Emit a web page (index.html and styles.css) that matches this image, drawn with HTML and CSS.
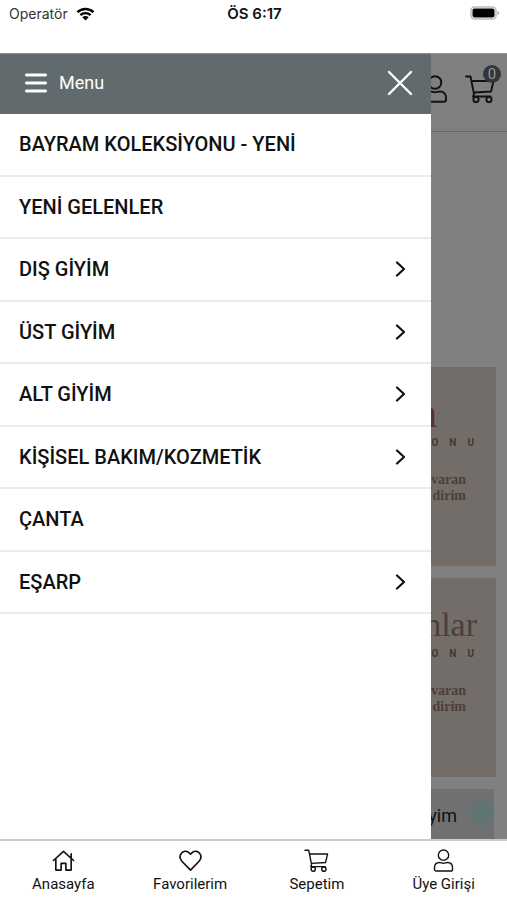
FILE: index.html
```html
<!DOCTYPE html>
<html lang="tr">
<head>
<meta charset="utf-8">
<meta name="viewport" content="width=device-width, initial-scale=1">
<title>Menu</title>
<link rel="stylesheet" href="styles.css">
</head>
<body>
<svg class="defs" aria-hidden="true">
  <symbol id="cart" viewBox="0 0 30 28">
    <path d="M1 1.500h4.500l3.500 17.500-1 2.500h17.500M6.500 6h22l-2.500 10.500-17 1"/>
    <circle cx="11" cy="24.500" r="2.600"/><circle cx="24" cy="24.500" r="2.600"/>
  </symbol>
  <symbol id="user" viewBox="0 0 24 28">
    <circle cx="12" cy="7.500" r="6.300"/>
    <path d="M7 16.500c2 0 3 .8 5 .8s3-.8 5-.8c4 0 6 3 6 6.500v1.500c0 1.500-1 2.300-2.300 2.300H3.300C2 26.800 1 26 1 24.500V23c0-3.500 2-6.500 6-6.500z"/>
  </symbol>
  <symbol id="chevron" viewBox="0 0 10 16"><path d="M1.500 1.500L8.500 8l-7 6.500"/></symbol>
</svg>

<header class="status">
  <span class="carrier">Operatör
    <svg class="wifi" viewBox="0 0 18 14" aria-hidden="true"><path d="M1 5.200a11.500 11.500 0 0 1 16 0M3.900 8.200a7.400 7.400 0 0 1 10.200 0"/><path class="dot" d="M9 13.500L5.800 10.300a4.600 4.600 0 0 1 6.400 0z"/></svg>
  </span>
  <span class="clock">ÖS 6:17</span>
  <svg class="battery" viewBox="0 0 30 14" aria-hidden="true"><rect class="shell" x="1" y="1" width="25" height="12" rx="3.500"/><rect x="2.500" y="2.500" width="22" height="9" rx="2"/><path class="tip" d="M27.500 5c2 .5 2 3.500 0 4z"/></svg>
</header>

<div class="stage">
  <main class="page">
    <div class="toolbar">
      <svg class="tool user" aria-hidden="true"><use href="#user"/></svg>
      <a class="basket" href="#sepet" aria-label="Sepet"><svg class="tool" aria-hidden="true"><use href="#cart"/></svg><span class="badge">0</span></a>
    </div>
    <div class="banners">
      <section class="banner">
        <h2 class="title red">n</h2>
        <p class="sub">ONU</p>
        <p class="copy">varan<br>dirim</p>
      </section>
      <section class="banner">
        <h2 class="title">nlar</h2>
        <p class="sub">ONU</p>
        <p class="copy">varan<br>dirim</p>
      </section>
      <section class="category"><span>yim</span><i class="bubble"></i></section>
    </div>
  </main>

  <aside class="drawer">
    <div class="drawer-head">
      <svg class="bars" viewBox="0 0 22 20" aria-hidden="true"><path d="M1.500 2h19M1.500 10h19M1.500 18h19"/></svg>
      <span>Menu</span>
      <button class="close" type="button" aria-label="Kapat"><svg viewBox="0 0 26 26" aria-hidden="true"><path d="M2 2l22 22M24 2L2 24"/></svg></button>
    </div>
    <nav class="menu">
      <a href="#bayram">BAYRAM KOLEKSİYONU - YENİ</a>
      <a href="#yeni">YENİ GELENLER</a>
      <a href="#dis">DIŞ GİYİM<svg class="chevron" aria-hidden="true"><use href="#chevron"/></svg></a>
      <a href="#ust">ÜST GİYİM<svg class="chevron" aria-hidden="true"><use href="#chevron"/></svg></a>
      <a href="#alt">ALT GİYİM<svg class="chevron" aria-hidden="true"><use href="#chevron"/></svg></a>
      <a href="#bakim">KİŞİSEL BAKIM/KOZMETİK<svg class="chevron" aria-hidden="true"><use href="#chevron"/></svg></a>
      <a href="#canta">ÇANTA</a>
      <a href="#esarp">EŞARP<svg class="chevron" aria-hidden="true"><use href="#chevron"/></svg></a>
    </nav>
  </aside>
</div>

<nav class="tabs">
  <a href="#anasayfa"><svg viewBox="0 0 24 24" aria-hidden="true"><path d="M1.500 12L12 2.500 22.500 12M4 10.500V22h5.500v-7h5v7H20V10.500M20 9V5"/></svg>Anasayfa</a>
  <a href="#favoriler"><svg viewBox="0 0 24 24" aria-hidden="true"><path d="M12 22L3 12.800C-2 7 4.500-.5 10 3.500l2 2 2-2c5.500-4 12 3.500 7 9.300z"/></svg>Favorilerim</a>
  <a href="#sepet"><svg aria-hidden="true"><use href="#cart"/></svg>Sepetim</a>
  <a href="#giris"><svg aria-hidden="true"><use href="#user"/></svg>Üye Girişi</a>
</nav>
</body>
</html>
```
FILE: styles.css
```css
* { box-sizing: border-box; }
body {
  margin: 0;
  min-height: 100vh;
  display: flex;
  flex-direction: column;
  background: #fff;
  color: #111;
  font-family: Roboto, "Liberation Sans", sans-serif;
}
a { color: inherit; text-decoration: none; }
h2, p { margin: 0; }
svg { fill: none; stroke: currentColor; stroke-linecap: round; stroke-linejoin: round; }
.defs { position: absolute; width: 0; height: 0; }

.status {
  display: grid;
  grid-template-columns: 1fr auto 1fr;
  align-items: start;
  height: 53px;
  padding: 5px 7px 0 9px;
  font: 14px/18px Inter, sans-serif;
}
.carrier { display: flex; align-items: center; gap: 8px; color: #333; }
.wifi { width: 19px; height: 14px; color: #000; stroke-width: 2.4; stroke-linecap: butt; }
.wifi .dot { fill: #000; stroke: none; }
.clock { font-size: 15px; font-weight: 600; }
.battery { width: 30px; height: 14px; margin-top: 1px; justify-self: end; fill: #000; stroke: none; }
.battery .shell { fill: #fff; stroke: #bbb; stroke-width: 1.500; }
.battery .tip { fill: #aaa; }

.stage { position: relative; flex: 1; display: flex; flex-direction: column; background: #808080; }
.page { flex: 1; display: flex; flex-direction: column; }
.toolbar {
  display: flex;
  justify-content: flex-end;
  align-items: center;
  gap: 18px;
  height: 79px;
  padding: 0 12px 8px 0;
  border-top: 1px solid #929696;
  border-bottom: 1px solid #666;
}
.tool { display: block; width: 30px; height: 28px; stroke-width: 1.900; }
.tool.user { width: 24px; }
.basket { position: relative; }
.badge {
  position: absolute;
  top: -10px;
  right: -6px;
  width: 18px;
  height: 18px;
  border-radius: 50%;
  background: #303738;
  color: #929696;
  font-size: 15px;
  line-height: 18px;
  text-align: center;
}
.banners { display: flex; flex-direction: column; flex: 1; gap: 12px; padding: 235px 11px 0; }
.banner { height: 199px; padding: 26px 19px; background: #726d69; text-align: right; }
.title { margin-bottom: 2px; font: 34px/42px "Liberation Serif", serif; color: #4e3d39; }
.title.red { padding-right: 40px; font-size: 40px; color: #5c3033; }
.sub { margin-right: -8px; font-size: 10px; font-weight: 700; line-height: 12px; letter-spacing: 11px; color: #3e3835; }
.copy { margin: 23px 11px 0 0; font: 700 14px/16px "Liberation Serif", serif; color: #4e3d39; }
.category {
  display: flex;
  align-items: center;
  justify-content: flex-end;
  gap: 13px;
  flex: 1;
  margin-right: 2px;
  padding-top: 4px;
  background: #6f7070;
  font-size: 18px;
  line-height: 24px;
}
.bubble { width: 24px; height: 24px; margin-bottom: 8px; border-radius: 50%; background: #607474; }

.drawer {
  position: absolute;
  inset: 0 15% 0 0;
  background: #fff;
}
.drawer-head {
  display: flex;
  align-items: center;
  gap: 12px;
  height: 61px;
  padding: 0 18px 3px 25px;
  background: #616b6d;
  border-top: 1px solid #879091;
  color: #fff;
  font-size: 18px;
}
.bars { width: 22px; height: 20px; stroke-width: 3; }
.close { margin-left: auto; padding: 0; border: 0; background: none; color: #fff; }
.close svg { display: block; width: 26px; height: 26px; stroke-width: 2.400; }
.menu { display: grid; grid-auto-rows: 1fr; height: 500px; }
.menu a {
  display: flex;
  align-items: center;
  justify-content: space-between;
  padding: 0 25px 0 19px;
  border-bottom: 2px solid #ececec;
  font-size: 20px;
  font-weight: 500;
}
.chevron { width: 11px; height: 16px; stroke-width: 2.200; }

.tabs {
  display: grid;
  grid-template-columns: repeat(4, 1fr);
  height: 61px;
  border-top: 2px solid #ccc;
  background: #fff;
}
.tabs a {
  display: flex;
  flex-direction: column;
  align-items: center;
  gap: 2px;
  padding-top: 8px;
  font-size: 15px;
  line-height: 20px;
}
.tabs svg { width: 25px; height: 23px; stroke-width: 1.700; }
```
